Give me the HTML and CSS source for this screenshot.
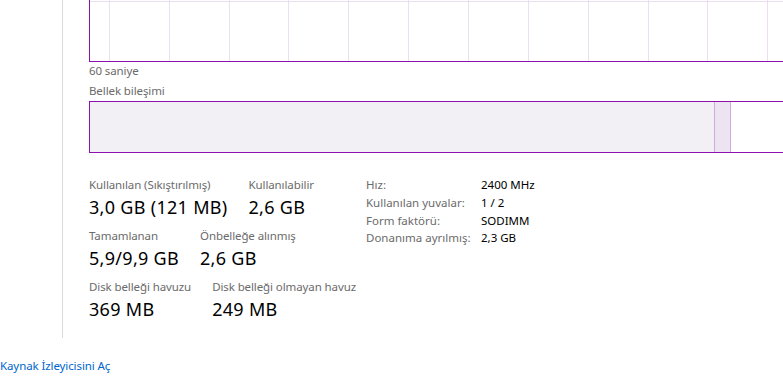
FILE: index.html
```html
<!DOCTYPE html>
<html lang="tr">
<head>
<meta charset="utf-8">
<title>Bellek</title>
<link rel="stylesheet" href="styles.css">
</head>
<body>
<div class="page">
  <div class="main">
    <div class="graph">
      <svg class="grid" width="693" height="61" viewBox="0 0 693 61" shape-rendering="crispEdges">
        <g stroke="#ecdff1" stroke-width="1">
          <line x1="0" y1="1.5" x2="693" y2="1.5"/>
          <line x1="19.5" y1="0" x2="19.5" y2="61"/>
          <line x1="79.5" y1="0" x2="79.5" y2="61"/>
          <line x1="139.5" y1="0" x2="139.5" y2="61"/>
          <line x1="198.5" y1="0" x2="198.5" y2="61"/>
          <line x1="258.5" y1="0" x2="258.5" y2="61"/>
          <line x1="318.5" y1="0" x2="318.5" y2="61"/>
          <line x1="378.5" y1="0" x2="378.5" y2="61"/>
          <line x1="438.5" y1="0" x2="438.5" y2="61"/>
          <line x1="498.5" y1="0" x2="498.5" y2="61"/>
          <line x1="558.5" y1="0" x2="558.5" y2="61"/>
          <line x1="617.5" y1="0" x2="617.5" y2="61"/>
          <line x1="677.5" y1="0" x2="677.5" y2="61"/>
        </g>
      </svg>
    </div>
    <div class="caption">60 saniye</div>
    <div class="caption caption-title">Bellek bileşimi</div>
    <div class="composition">
      <div class="seg seg-used"></div>
      <div class="seg seg-modified"></div>
      <div class="seg seg-free"></div>
    </div>
    <div class="stats">
      <div class="stats-left">
        <div class="stat-row">
          <div class="stat">
            <div class="stat-label">Kullanılan (Sıkıştırılmış)</div>
            <div class="stat-value">3,0 GB (121 MB)</div>
          </div>
          <div class="stat">
            <div class="stat-label">Kullanılabilir</div>
            <div class="stat-value">2,6 GB</div>
          </div>
        </div>
        <div class="stat-row">
          <div class="stat">
            <div class="stat-label">Tamamlanan</div>
            <div class="stat-value">5,9/9,9 GB</div>
          </div>
          <div class="stat">
            <div class="stat-label">Önbelleğe alınmış</div>
            <div class="stat-value">2,6 GB</div>
          </div>
        </div>
        <div class="stat-row">
          <div class="stat">
            <div class="stat-label">Disk belleği havuzu</div>
            <div class="stat-value">369 MB</div>
          </div>
          <div class="stat">
            <div class="stat-label">Disk belleği olmayan havuz</div>
            <div class="stat-value">249 MB</div>
          </div>
        </div>
      </div>
      <dl class="specs">
        <div class="spec"><dt>Hız:</dt><dd>2400 MHz</dd></div>
        <div class="spec"><dt>Kullanılan yuvalar:</dt><dd>1 / 2</dd></div>
        <div class="spec"><dt>Form faktörü:</dt><dd>SODIMM</dd></div>
        <div class="spec"><dt>Donanıma ayrılmış:</dt><dd>2,3 GB</dd></div>
      </dl>
    </div>
  </div>
  <a class="monitor-link" href="#">Kaynak İzleyicisini Aç</a>
</div>
</body>
</html>
```

FILE: styles.css
```css
html, body {
  margin: 0;
  padding: 0;
  overflow: hidden;
  background: #ffffff;
}

body {
  font-family: "Noto Sans", "Open Sans", sans-serif;
  font-size: 11.5px;
  color: #000000;
}

.page {
  width: 783px;
  height: 376px;
}

.main {
  margin-left: 62px;
  border-left: 1px solid #dadada;
  padding-left: 26px;
  height: 338px;
  box-sizing: border-box;
  overflow: hidden;
}

.graph {
  height: 61px;
  border-left: 1px solid #8b12ae;
  border-bottom: 1px solid #8b12ae;
  overflow: hidden;
}

.grid {
  display: block;
}

.caption {
  margin-top: 1px;
  font-size: 11.5px;
  line-height: 16px;
  letter-spacing: -0.1px;
  color: #6b6b6b;
}

.caption-title {
  margin-top: 4px;
}

.composition {
  margin-top: 2px;
  height: 50px;
  border: 1px solid #8b12ae;
  border-right: none;
  display: flex;
}

.seg-used {
  width: 624px;
  background: #f2f0f4;
}

.seg-modified {
  width: 15px;
  background: #ede4f2;
  border-left: 1px solid #d3aade;
  border-right: 1px solid #d3aade;
}

.seg-free {
  flex: 1;
  background: #ffffff;
}

.stats {
  margin-top: 24px;
  display: flex;
}

.stats-left {
  flex: 0 0 277px;
  min-width: 0;
  display: flex;
  flex-direction: column;
  gap: 9px;
}

.stat-row {
  display: flex;
  gap: 21px;
}

.stat-label {
  font-size: 11.5px;
  line-height: 16px;
  letter-spacing: -0.1px;
  color: #6b6b6b;
  white-space: nowrap;
}

.stat-value {
  margin-top: 2px;
  font-size: 18px;
  line-height: 24px;
  letter-spacing: 0.3px;
  color: #000000;
  white-space: nowrap;
}

.specs {
  margin: -1px 0 0 0;
  padding: 0;
  font-size: 11.5px;
}

.spec {
  display: flex;
  line-height: 17.75px;
}

.spec dt {
  width: 115px;
  flex: 0 0 115px;
  color: #6b6b6b;
}

.spec dd {
  margin: 0;
  color: #000000;
}

.monitor-link {
  display: inline-block;
  margin-top: 20px;
  font-size: 11.5px;
  line-height: 16px;
  letter-spacing: -0.1px;
  color: #0066cc;
  text-decoration: none;
}
```
